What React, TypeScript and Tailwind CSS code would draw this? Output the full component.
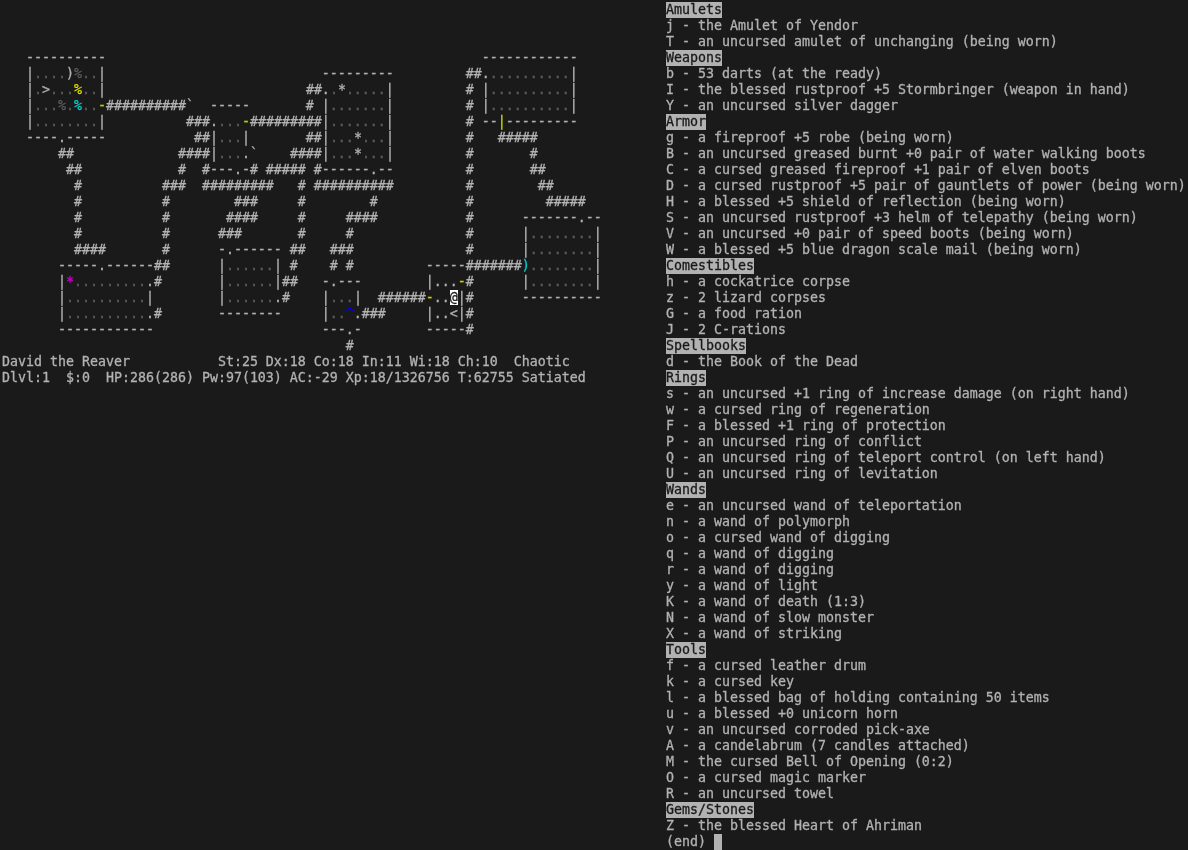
const FONT = "font-['DejaVu_Sans_Mono',monospace] text-[13.29px] leading-4 [-webkit-text-stroke:0.3px]";

// map pieces: [column, text] per terminal row. Marker chars get mapped in CELL below.
const MAP: Record<number, [number, string][]> = {
  3: [[3, "----------"], [60, "------------"]],
  4: [[3, "|....)d..|"], [40, "---------"], [58, "##,..........|"]],
  5: [[3, "|.>...y..|"], [38, "##,.*.....|"], [58, "#"], [60, "|..........|"]],
  6: [[3, "|...d.c..Y##########`"], [26, "-----"], [38, "#"], [40, "|.......|"], [58, "#"], [60, "|..........|"]],
  7: [[3, "|........|"], [23, "###,...Y#########|.......|"], [58, "#"], [60, "--I---------"]],
  8: [[3, "----,-----"], [24, "##|...|"], [38, "##|...*...|"], [58, "#"], [62, "#####"]],
  9: [[7, "##"], [22, "####|...,`"], [36, "####|...*...|"], [58, "#"], [66, "#"]],
  10: [[8, "##"], [22, "#"], [25, "#---,-#"], [33, "#####"], [39, "#------,--"], [58, "#"], [66, "##"]],
  11: [[9, "#"], [20, "###"], [25, "#########"], [37, "#"], [39, "##########"], [58, "#"], [67, "##"]],
  12: [[9, "#"], [20, "#"], [29, "###"], [37, "#"], [46, "#"], [58, "#"], [68, "#####"]],
  13: [[9, "#"], [20, "#"], [28, "####"], [37, "#"], [43, "####"], [58, "#"], [65, "-------,--"]],
  14: [[9, "#"], [20, "#"], [27, "###"], [37, "#"], [43, "#"], [58, "#"], [65, "|........|"]],
  15: [[9, "####"], [20, "#"], [27, "-,------"], [36, "##"], [41, "###"], [58, "#"], [65, "|........|"]],
  16: [[7, "-----,------##"], [27, "|......|"], [36, "#"], [41, "#"], [43, "#"], [53, "-----#######C........|"]],
  17: [[7, "|M.........,#"], [27, "|......|##"], [40, "-,---"], [53, "|,,,Y#"], [65, "|........|"]],
  18: [[7, "|..........|"], [27, "|......,#"], [40, "|...|"], [47, "######Y,,@|#"], [65, "----------"]],
  19: [[7, "|..........,#"], [27, "--------"], [40, "|..B,###"], [53, "|,,<|#"]],
  20: [[7, "------------"], [40, "---,-"], [53, "-----#"]],
  21: [[43, "#"]],
};

const CELL: Record<string, [string, string]> = {
  ".": [".", "text-[#5c5c5c]"],
  ",": [".", ""],
  d: ["%", "text-[#5c5c5c]"],
  y: ["%", "text-[#d7d700] "],
  c: ["%", "text-[#00cdcd]"],
  Y: ["-", "text-[#cdcd00]"],
  I: ["|", "text-[#cdcd00]"],
  C: [")", "text-[#00cdcd]"],
  M: ["*", "text-[#cd00cd]"],
  B: ["^", "text-[#0000ee]"],
  "@": ["@", "bg-white text-[#1a1a1a]"],
};

const INVENTORY = [
  "#Amulets",
  "j - the Amulet of Yendor",
  "T - an uncursed amulet of unchanging (being worn)",
  "#Weapons",
  "b - 53 darts (at the ready)",
  "I - the blessed rustproof +5 Stormbringer (weapon in hand)",
  "Y - an uncursed silver dagger",
  "#Armor",
  "g - a fireproof +5 robe (being worn)",
  "B - an uncursed greased burnt +0 pair of water walking boots",
  "C - a cursed greased fireproof +1 pair of elven boots",
  "D - a cursed rustproof +5 pair of gauntlets of power (being worn)",
  "H - a blessed +5 shield of reflection (being worn)",
  "S - an uncursed rustproof +3 helm of telepathy (being worn)",
  "V - an uncursed +0 pair of speed boots (being worn)",
  "W - a blessed +5 blue dragon scale mail (being worn)",
  "#Comestibles",
  "h - a cockatrice corpse",
  "z - 2 lizard corpses",
  "G - a food ration",
  "J - 2 C-rations",
  "#Spellbooks",
  "d - the Book of the Dead",
  "#Rings",
  "s - an uncursed +1 ring of increase damage (on right hand)",
  "w - a cursed ring of regeneration",
  "F - a blessed +1 ring of protection",
  "P - an uncursed ring of conflict",
  "Q - an uncursed ring of teleport control (on left hand)",
  "U - an uncursed ring of levitation",
  "#Wands",
  "e - an uncursed wand of teleportation",
  "n - a wand of polymorph",
  "o - a cursed wand of digging",
  "q - a wand of digging",
  "r - a wand of digging",
  "y - a wand of light",
  "K - a wand of death (1:3)",
  "N - a wand of slow monster",
  "X - a wand of striking",
  "#Tools",
  "f - a cursed leather drum",
  "k - a cursed key",
  "l - a blessed bag of holding containing 50 items",
  "u - a blessed +0 unicorn horn",
  "v - an uncursed corroded pick-axe",
  "A - a candelabrum (7 candles attached)",
  "M - the cursed Bell of Opening (0:2)",
  "O - a cursed magic marker",
  "R - an uncursed towel",
  "#Gems/Stones",
  "Z - the blessed Heart of Ahriman",
];

function MapRow({ pieces }: { pieces: [number, string][] }) {
  // lay the pieces on a fixed-width line, then group into runs of one colour
  let line = "";
  for (const [col, text] of pieces) line = line.padEnd(col, " ") + text;

  const runs: { text: string; cls: string }[] = [];
  for (const ch of line) {
    const [glyph, cls] = CELL[ch] ?? [ch, ""];
    const last = runs[runs.length - 1];
    if (last && (last.cls === cls || ch === " ")) last.text += glyph;
    else runs.push({ text: glyph, cls });
  }

  return (
    <div className="h-4 whitespace-pre">
      {runs.map((r, i) => <span key={i} className={r.cls}>{r.text}</span>)}
    </div>
  );
}

export default function App() {
  return (
    <div className="h-screen w-full overflow-hidden bg-[#1a1a1a]">
      {/* own layer so the text gets grey antialiasing, no colour fringes */}
      <div className={`${FONT} flex h-full pl-[2px] pt-[2px] text-[#b2b2b2] will-change-transform`}>
        <div className="w-[664px] shrink-0">
          <div className="h-12" />
          {Array.from({ length: 19 }, (_, i) => <MapRow key={i} pieces={MAP[i + 3] ?? []} />)}
          <div className="h-4 whitespace-pre">{"David the Reaver           St:25 Dx:18 Co:18 In:11 Wi:18 Ch:10  Chaotic"}</div>
          <div className="h-4 whitespace-pre">{"Dlvl:1  $:0  HP:286(286) Pw:97(103) AC:-29 Xp:18/1326756 T:62755 Satiated"}</div>
        </div>
        <div className="flex-1 whitespace-pre">
          {INVENTORY.map((line) =>
            line.startsWith("#") ? (
              <div key={line} className="h-4"><span className="inline-block h-4 bg-[#b2b2b2] text-[#1a1a1a]">{line.slice(1)}</span></div>
            ) : (
              <div key={line} className="h-4">{line}</div>
            )
          )}
          <div className="flex h-4">
            <span>{"(end) "}</span>
            <span className="h-4 w-2 bg-[#b2b2b2]" />
          </div>
        </div>
      </div>
    </div>
  );
}
